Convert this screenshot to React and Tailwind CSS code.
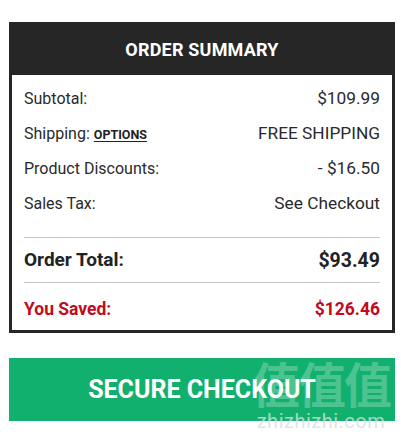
export default function App() {
  const rows = [
    { label: 'Subtotal:', value: '$109.99' },
    { label: 'Shipping:', value: 'FREE SHIPPING', link: 'OPTIONS' },
    { label: 'Product Discounts:', value: '- $16.50' },
    { label: 'Sales Tax:', value: 'See Checkout' },
  ];

  return (
    <div className="min-h-[438px] bg-white px-[9px] pt-[22px] font-['Roboto',_'Liberation_Sans',_sans-serif] text-[#222]">
      {/* summary card */}
      <section className="w-[386px] border-[3px] border-[#262626]">
        <header className="flex h-[50px] items-center justify-center bg-[#262626] pb-[1px]">
          <h1 className="text-[18px] font-bold tracking-[0.2px] text-white">ORDER SUMMARY</h1>
        </header>

        <div className="px-3 pt-[6px]">
          {rows.map((r) => (
            <div key={r.label} className="flex h-[35px] items-center justify-between">
              <span className="text-[16px] text-[#2a2a2a]">
                {r.label}
                {r.link && (
                  <a className="ml-[4px] text-[12.5px] font-bold text-[#222] underline underline-offset-2">{r.link}</a>
                )}
              </span>
              <span className="text-[17.3px] text-[#2a2a2a]">{r.value}</span>
            </div>
          ))}

          <div className="mt-[16px] border-t border-[#c8c8c8]" />
          <div className="flex h-[44px] items-center justify-between pt-[1px]">
            <span className="text-[19px] font-bold text-[#222]">Order Total:</span>
            <span className="text-[19.5px] font-bold text-[#222]">$93.49</span>
          </div>
          <div className="border-t border-[#c8c8c8]" />
          <div className="flex h-[47px] items-center justify-between pt-[6px]">
            <span className="text-[17.5px] font-bold text-[#c20a1c]">You Saved:</span>
            <span className="text-[17.5px] font-bold text-[#c20a1c]">$126.46</span>
          </div>
        </div>
      </section>

      {/* checkout button */}
      <div className="relative mt-[25px] w-[386px]">
        <button className="flex h-[63px] w-full items-center justify-center bg-[#12b06e] text-[25px] font-bold text-white">
          SECURE CHECKOUT
        </button>
        {/* watermark */}
        <div className="pointer-events-none absolute right-[5px] top-[-4px] flex flex-col items-center">
          <span className="font-['Noto_Sans_CJK_SC',_sans-serif] text-[48px] font-bold leading-[56px] tracking-[-2px] text-white/25">
            值值值
          </span>
          <span className="text-[20px] leading-[22px] tracking-[0.5px] text-[#d8e0dc]/80">zhizhizhi.com</span>
        </div>
      </div>
    </div>
  );
}
